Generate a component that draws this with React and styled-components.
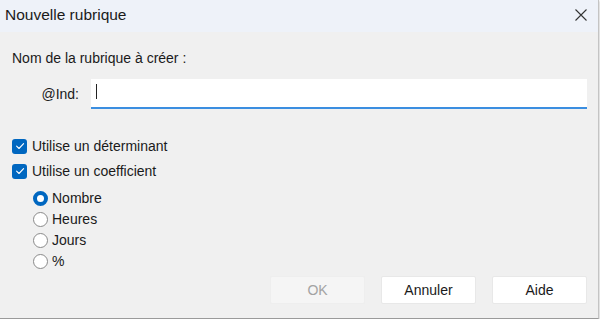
import React from 'react';
import styled, { createGlobalStyle } from 'styled-components'

const GlobalStyle = createGlobalStyle`
  html, body {
    margin: 0;
    padding: 0;
    background: #ffffff;
  }
  body {
    font-family: "Liberation Sans", Arial, sans-serif;
    color: #1a1a1a;
  }
`

const CheckIcon = () => (
  <svg width="10" height="10" viewBox="0 0 10 10">
    <path d="M1.6 5.2 L4 7.5 L8.6 2.6" fill="none" stroke="#fff" strokeWidth="1.1" strokeLinecap="round" strokeLinejoin="round" />
  </svg>
)

const CloseIcon = () => (
  <svg width="12" height="12" viewBox="0 0 12 12">
    <path d="M0.5 0.5 L11.5 11.5 M11.5 0.5 L0.5 11.5" stroke="#333" strokeWidth="1.1" />
  </svg>
)

const radios = ['Nombre', 'Heures', 'Jours', '%']

const App = () => {
  return (
    <>
      <GlobalStyle />
      <Window>
        <TitleBar>
          <Title>Nouvelle rubrique</Title>
          <CloseButton><CloseIcon /></CloseButton>
        </TitleBar>
        <Body>
          <Prompt>Nom de la rubrique à créer :</Prompt>
          <FieldRow>
            <FieldLabel>@Ind:</FieldLabel>
            <Input>
              <Caret />
            </Input>
          </FieldRow>
          <Checks>
            <CheckRow>
              <CheckBox><CheckIcon /></CheckBox>
              Utilise un déterminant
            </CheckRow>
            <CheckRow>
              <CheckBox><CheckIcon /></CheckBox>
              Utilise un coefficient
            </CheckRow>
          </Checks>
          <Bottom>
            <Radios>
              {radios.map((r, i) => (
                <RadioRow key={r}>
                  <Radio $checked={i === 0} />
                  {r}
                </RadioRow>
              ))}
            </Radios>
            <Buttons>
              <Button $disabled>OK</Button>
              <Button>Annuler</Button>
              <Button>Aide</Button>
            </Buttons>
          </Bottom>
        </Body>
      </Window>
    </>
  );
}

export default App;

const Window = styled.div`
  width: 598px;
  height: 318px;
  display: flex;
  flex-direction: column;
  background: #f0f0f0;
  border-right: 1px solid #c4c4c4;
  border-bottom: 1px solid #9a9a9a;
  box-shadow: 0 1px 2px rgba(0, 0, 0, 0.35);
`

const TitleBar = styled.div`
  height: 32px;
  background: #eef2f9;
  display: flex;
  align-items: center;
  justify-content: space-between;
  padding: 0 11px 3px 5px;
  box-sizing: border-box;
`

const Title = styled.div`
  font-size: 15.5px;
  color: #1b1b1b;
`

const CloseButton = styled.div`
  width: 12px;
  height: 12px;
  display: flex;
`

const Body = styled.div`
  flex: 1;
  padding: 18px 11px 0 12px;
  display: flex;
  flex-direction: column;
`

const Prompt = styled.div`
  font-size: 14px;
  line-height: 16px;
`

const FieldRow = styled.div`
  display: flex;
  align-items: center;
  margin-top: 13px;
`

const FieldLabel = styled.div`
  width: 67px;
  text-align: right;
  font-size: 14px;
  margin-right: 12px;
`

const Input = styled.div`
  width: 496px;
  height: 30px;
  box-sizing: border-box;
  background: #ffffff;
  border-bottom: 2px solid #3b8ee0;
  display: flex;
  align-items: center;
  padding-left: 5px;
`

const Caret = styled.div`
  width: 1px;
  height: 15px;
  background: #222;
  margin-top: -4px;
`

const Checks = styled.div`
  display: flex;
  flex-direction: column;
  gap: 9px;
  margin-top: 29px;
`

const CheckRow = styled.div`
  display: flex;
  align-items: center;
  gap: 5px;
  font-size: 14px;
  height: 16px;
`

const CheckBox = styled.div`
  width: 15px;
  height: 15px;
  border-radius: 3px;
  background: #0067c0;
  display: flex;
  align-items: center;
  justify-content: center;
`

const Bottom = styled.div`
  display: flex;
  justify-content: space-between;
  margin-top: 11px;
`

const Radios = styled.div`
  display: flex;
  flex-direction: column;
  gap: 5px;
  padding-left: 21px;
`

const RadioRow = styled.div`
  display: flex;
  align-items: center;
  gap: 4px;
  font-size: 14px;
  height: 16px;
`

const Radio = styled.div`
  width: 15px;
  height: 15px;
  border-radius: 50%;
  box-sizing: border-box;
  border: ${p => (p.$checked ? '4.5px solid #0067c0' : '1px solid #8a8a8a')};
  background: #ffffff;
`

const Buttons = styled.div`
  display: flex;
  gap: 16px;
  align-self: flex-start;
  margin-top: 86px;
`

const Button = styled.div`
  width: 95px;
  height: 28px;
  box-sizing: border-box;
  display: flex;
  align-items: center;
  justify-content: center;
  font-size: 14px;
  border-radius: 2px;
  background: ${p => (p.$disabled ? '#f5f5f5' : '#ffffff')};
  color: ${p => (p.$disabled ? '#a3a3a3' : '#1a1a1a')};
  border: 1px solid ${p => (p.$disabled ? '#eeeeee' : '#e8e8e8')};
`
